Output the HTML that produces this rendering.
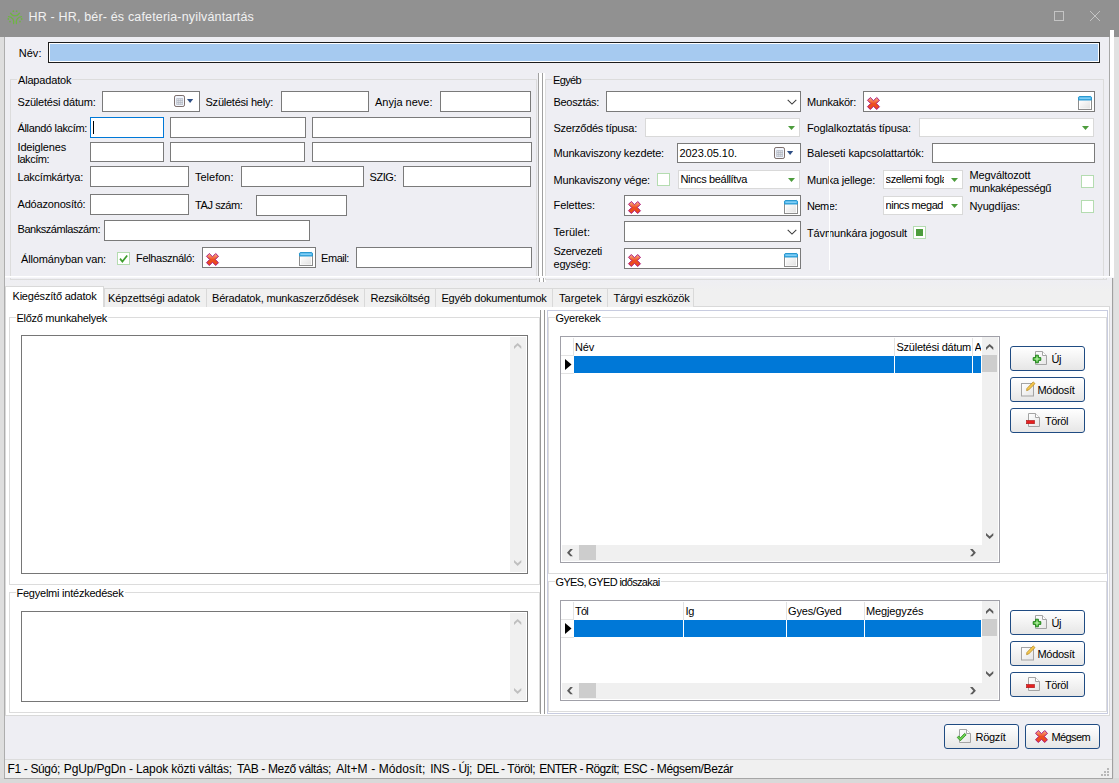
<!DOCTYPE html>
<html lang="hu"><head><meta charset="utf-8"><title>HR - HR, bér- és cafeteria-nyilvántartás</title><style>
html,body{margin:0;padding:0}
body{width:1119px;height:783px;overflow:hidden;background:#d9d9d9;position:relative;font-family:"Liberation Sans",sans-serif;font-size:11px;color:#000}
body>div,body>svg{position:absolute;box-sizing:border-box}
.ic{position:absolute;overflow:visible}
.lbl{white-space:nowrap;line-height:14px;height:auto;letter-spacing:-0.22px;color:#000}
.title{font-size:12.5px;color:#f2f2f2;white-space:nowrap;line-height:18px;}
.status{font-size:12px;white-space:nowrap;line-height:16px}
.inp{background:#fff;border:1px solid #7a7a7a}
.foc{border-color:#0078d7}
.nev{background:#a6caf0;border:1px solid #1c1c1c;box-shadow:inset 0 0 0 1px #fff}
.lcb{background:#fff;border:1px solid #d9d9d9}
.memo{background:#fff;border:1px solid #767676}
.grid{background:#fff;border:1px solid #a0a0a8}
.gb{border:1px solid #dcdcdc}
.it{position:absolute;left:2px;top:3px;white-space:nowrap;letter-spacing:-0.22px;line-height:14px}
.cb{width:13px;height:13px;background:#fff;border:1px solid #b4dcb0}
.tab{background:#f0f0f0;border:1px solid #d9d9d9;border-bottom:none}
.tab.act{background:#fff}
.btn{border:1px solid #1f4b82;border-radius:3px;background:linear-gradient(#ffffff,#f4f4f4 45%,#e6e6e6)}
.bi{width:16px;height:16px}
</style></head><body>
<svg width="0" height="0" style="position:absolute"><defs><linearGradient id="gx" x1="0" y1="0" x2="0" y2="1"><stop offset="0" stop-color="#fbb48c"/><stop offset="0.5" stop-color="#ee4e20"/><stop offset="1" stop-color="#e8481c"/></linearGradient><linearGradient id="gw" x1="0" y1="0" x2="1" y2="1"><stop offset="0" stop-color="#fdfdfd"/><stop offset="1" stop-color="#e2e2e2"/></linearGradient><linearGradient id="gd" x1="0" y1="0" x2="1" y2="1"><stop offset="0" stop-color="#ffffff"/><stop offset="1" stop-color="#e6e6e6"/></linearGradient></defs></svg>
<div class="" style="left:0px;top:0px;width:1119px;height:37px;background:#919191"></div>
<div class="" style="left:0px;top:37px;width:4px;height:746px;background:#dedede"></div>
<div class="" style="left:4px;top:37px;width:1px;height:742px;background:#adadad"></div>
<div class="" style="left:5px;top:37px;width:1104px;height:240px;background:#eeeef3"></div>
<div class="" style="left:1109px;top:37px;width:1px;height:240px;background:#a8a8a8"></div>
<div class="" style="left:1110px;top:30px;width:4px;height:247px;background:#fff"></div>
<div class="" style="left:1114px;top:37px;width:5px;height:746px;background:#e1e1e1"></div>
<div class="" style="left:5px;top:277px;width:1107px;height:30px;background:linear-gradient(#eeeef3,#f0f0f0 14px)"></div>
<div class="" style="left:5px;top:307px;width:1107px;height:452px;background:#eeeef3"></div>
<div class="" style="left:1112px;top:278px;width:1px;height:501px;background:#a0a0a0"></div>
<div class="" style="left:5px;top:759px;width:1107px;height:19px;background:#f0f0f0;border-top:1px solid #dcdcdc;box-sizing:border-box"></div>
<div class="" style="left:0px;top:778px;width:1119px;height:5px;background:#d9d9d9"></div>
<div class="" style="left:4px;top:778px;width:1109px;height:1px;background:#a6a6a6"></div>
<div class="status" style="left:7.5px;top:761px;letter-spacing:-0.353px">F1 - Súgó;</div>
<div class="status" style="left:63.8px;top:761px;letter-spacing:-0.147px">PgUp/PgDn - Lapok közti váltás;</div>
<div class="status" style="left:237px;top:761px;letter-spacing:-0.36px">TAB - Mező váltás;</div>
<div class="status" style="left:336.2px;top:761px;letter-spacing:0.1px">Alt+M - Módosít;</div>
<div class="status" style="left:430.3px;top:761px;letter-spacing:-0.405px">INS - Új;</div>
<div class="status" style="left:476.8px;top:761px;letter-spacing:-0.486px">DEL - Töröl;</div>
<div class="status" style="left:539.3px;top:761px;letter-spacing:-0.644px">ENTER - Rögzít;</div>
<div class="status" style="left:623.8px;top:761px;letter-spacing:-0.38px">ESC - Mégsem/Bezár</div>
<svg class="ic" style="left:1100px;top:767px" width="10" height="10" viewBox="0 0 10 10"><g fill="#b8b8b8"><rect x="7" y="1" width="2" height="2"/><rect x="4" y="4" width="2" height="2"/><rect x="7" y="4" width="2" height="2"/><rect x="1" y="7" width="2" height="2"/><rect x="4" y="7" width="2" height="2"/><rect x="7" y="7" width="2" height="2"/></g></svg>
<svg class="ic" style="left:7px;top:10px" width="16" height="15" viewBox="0 0 16 15"><g fill="none" stroke="#6fb544" stroke-width="1.3" stroke-linecap="round"><path d="M3.5 3.2 A5.2 5.2 0 0 0 12.5 3.2"/><path d="M1.5 6.6 A5.5 5.5 0 0 1 6.6 13.6"/><path d="M14.5 6.6 A5.5 5.5 0 0 0 9.4 13.6"/></g><g fill="#6fb544"><circle cx="6.4" cy="1.2" r="0.9"/><circle cx="9.6" cy="1.2" r="0.9"/><circle cx="1.3" cy="9" r="0.9"/><circle cx="3" cy="11.6" r="0.9"/><circle cx="14.7" cy="9" r="0.9"/><circle cx="13" cy="11.6" r="0.9"/></g></svg>
<div class="title" style="left:28.5px;top:8px;letter-spacing:0.167px">HR - HR, bér- és cafeteria-nyilvántartás</div>
<svg class="ic" style="left:1053px;top:10px" width="12" height="12" viewBox="0 0 12 12"><rect x="1.5" y="1.5" width="9" height="9" fill="none" stroke="#c4c4c4" stroke-width="1"/></svg>
<svg class="ic" style="left:1089px;top:10px" width="12" height="12" viewBox="0 0 12 12"><path d="M1 1 L11 11 M11 1 L1 11" fill="none" stroke="#c4c4c4" stroke-width="1"/></svg>
<div class="lbl" style="left:18.7px;top:46px;letter-spacing:0.044px;">Név:</div>
<div class="nev" style="left:48px;top:42px;width:1052px;height:21px"></div>
<div class="gb" style="left:10px;top:79px;width:527px;height:201px;border-color:#dcdcdc"></div>
<div class="lbl" style="left:17px;top:73px;padding:0 1px;background:#eeeef3;letter-spacing:-0.175px">Alapadatok</div>
<div class="lbl" style="left:17.5px;top:95px;letter-spacing:-0.208px;">Születési dátum:</div>
<div class="inp" style="left:102px;top:91px;width:98px;height:21px"></div>
<svg class="ic" style="left:174px;top:95px" width="22" height="13" viewBox="0 0 22 13"><rect x="0.5" y="0.5" width="10" height="11" rx="1.6" fill="#f2f6fd" stroke="#7c6e6c"/><rect x="2.4" y="3.3" width="6.6" height="6.6" fill="#aeb4c0"/><g fill="#fff"><rect x="3.3" y="4.2" width="1.1" height="1.1"/><rect x="5.3" y="4.2" width="1.1" height="1.1"/><rect x="7.3" y="4.2" width="1.1" height="1.1"/><rect x="3.3" y="6.2" width="1.1" height="1.1"/><rect x="5.3" y="6.2" width="1.1" height="1.1"/><rect x="7.3" y="6.2" width="1.1" height="1.1"/><rect x="3.3" y="8.2" width="1.1" height="1.1"/><rect x="5.3" y="8.2" width="1.1" height="1.1"/><rect x="7.3" y="8.2" width="1.1" height="1.1"/></g><path d="M13 4 h6.2 l-3.1 4z" fill="#2f4f85"/></svg>
<div class="lbl" style="left:205.5px;top:95px;letter-spacing:-0.229px;">Születési hely:</div>
<div class="inp" style="left:281px;top:91px;width:88px;height:21px"></div>
<div class="lbl" style="left:375px;top:95px;letter-spacing:0.001px;">Anyja neve:</div>
<div class="inp" style="left:440px;top:91px;width:91px;height:21px"></div>
<div class="lbl" style="left:17.5px;top:121px;letter-spacing:-0.34px;">Állandó lakcím:</div>
<div class="inp foc" style="left:90px;top:117px;width:74px;height:21px"><div style="position:absolute;left:2px;top:2.5px;width:1px;height:13px;background:#000"></div></div>
<div class="inp" style="left:170px;top:117px;width:136px;height:21px"></div>
<div class="inp" style="left:312px;top:117px;width:219px;height:21px"></div>
<div class="lbl" style="left:17.5px;top:140px;letter-spacing:-0.166px;">Ideiglenes</div>
<div class="lbl" style="left:17.5px;top:152px;letter-spacing:-0.478px;">lakcím:</div>
<div class="inp" style="left:90px;top:142px;width:74px;height:20px"></div>
<div class="inp" style="left:170px;top:142px;width:135px;height:20px"></div>
<div class="inp" style="left:312px;top:142px;width:220px;height:20px"></div>
<div class="lbl" style="left:17.5px;top:170px;letter-spacing:-0.228px;">Lakcímkártya:</div>
<div class="inp" style="left:90px;top:166px;width:99px;height:21px"></div>
<div class="lbl" style="left:195px;top:170px;letter-spacing:-0.004px;">Telefon:</div>
<div class="inp" style="left:241px;top:166px;width:123px;height:21px"></div>
<div class="lbl" style="left:369.5px;top:170px;letter-spacing:-0.447px;">SZIG:</div>
<div class="inp" style="left:403px;top:166px;width:128px;height:21px"></div>
<div class="lbl" style="left:17.5px;top:197px;letter-spacing:-0.18px;">Adóazonosító:</div>
<div class="inp" style="left:90px;top:194px;width:99px;height:21px"></div>
<div class="lbl" style="left:195px;top:198px;letter-spacing:-0.405px;">TAJ szám:</div>
<div class="inp" style="left:256px;top:195px;width:91px;height:21px"></div>
<div class="lbl" style="left:17.5px;top:222px;letter-spacing:-0.451px;">Bankszámlaszám:</div>
<div class="inp" style="left:104px;top:220px;width:206px;height:21px"></div>
<div class="lbl" style="left:21px;top:252px;letter-spacing:-0.153px;">Állományban van:</div>
<div class="cb" style="left:117px;top:252px"><svg width="11" height="11" viewBox="0 0 11 11" style="position:absolute;left:0;top:0"><path d="M2 5.6 L4.4 8.6 L9.2 2.4" fill="none" stroke="#3e9e2e" stroke-width="1.7"/></svg></div>
<div class="lbl" style="left:136px;top:251px;letter-spacing:-0.323px;">Felhasználó:</div>
<div class="inp" style="left:202px;top:247px;width:114px;height:21px"></div>
<svg class="ic" style="left:206px;top:253px" width="13" height="13" viewBox="0 0 13 13"><path d="M3.3 0.5 L6.5 3.7 L9.7 0.5 L12.5 3.3 L9.3 6.5 L12.5 9.7 L9.7 12.5 L6.5 9.3 L3.3 12.5 L0.5 9.7 L3.7 6.5 L0.5 3.3 Z" fill="url(#gx)" stroke="#a8127e" stroke-width="0.95" stroke-linejoin="round"/></svg>
<svg class="ic" style="left:299px;top:252px" width="14" height="14" viewBox="0 0 14 14"><rect x="0.5" y="3.5" width="13" height="10" fill="#fff" stroke="#8c8c8c"/><rect x="2" y="5" width="10" height="7.5" fill="url(#gw)"/><path d="M1.2 0.5 h11.6 l0.7 0.7 v2.8 h-13 v-2.8z" fill="#44aee6" stroke="#2a98cf"/><rect x="1.5" y="1.6" width="11" height="1.1" fill="#9adcfc"/></svg>
<div class="lbl" style="left:321px;top:251px;letter-spacing:-0.427px;">Email:</div>
<div class="inp" style="left:356px;top:247px;width:176px;height:21px"></div>
<div class="" style="left:538px;top:73px;width:1px;height:203px;background:#a0a0a0"></div>
<div class="" style="left:539px;top:73px;width:3px;height:203px;background:#fff"></div>
<div class="" style="left:542px;top:73px;width:1px;height:203px;background:#a0a0a0"></div>
<div class="" style="left:543px;top:73px;width:2px;height:203px;background:#fff"></div>
<div class="" style="left:539px;top:278px;width:7px;height:4px;background:#fff"></div>
<div class="" style="left:539px;top:278px;width:1px;height:4px;background:#a0a0a0"></div>
<div class="" style="left:543px;top:278px;width:1px;height:4px;background:#a0a0a0"></div>
<div class="gb" style="left:545px;top:79px;width:559px;height:201px;border-color:#dcdcdc"></div>
<div class="lbl" style="left:552px;top:73px;padding:0 1px;background:#eeeef3;letter-spacing:-0.641px">Egyéb</div>
<div class="" style="left:1103px;top:279px;width:4px;height:1px;background:#dcdcdc"></div>
<div class="lbl" style="left:553.5px;top:95px;letter-spacing:-0.312px;">Beosztás:</div>
<div class="inp" style="left:606px;top:91px;width:195px;height:21px"></div>
<svg class="ic" style="left:787.3px;top:99.3px" width="10" height="6" viewBox="0 0 10 6"><path d="M0.7 0.8 L5 5.1 L9.3 0.8" fill="none" stroke="#3c3c3c" stroke-width="1.05"/></svg>
<div class="lbl" style="left:807px;top:95px;letter-spacing:-0.262px;">Munkakör:</div>
<div class="inp" style="left:863px;top:91px;width:232px;height:21px"></div>
<svg class="ic" style="left:867px;top:97px" width="13" height="13" viewBox="0 0 13 13"><path d="M3.3 0.5 L6.5 3.7 L9.7 0.5 L12.5 3.3 L9.3 6.5 L12.5 9.7 L9.7 12.5 L6.5 9.3 L3.3 12.5 L0.5 9.7 L3.7 6.5 L0.5 3.3 Z" fill="url(#gx)" stroke="#a8127e" stroke-width="0.95" stroke-linejoin="round"/></svg>
<svg class="ic" style="left:1078px;top:96px" width="14" height="14" viewBox="0 0 14 14"><rect x="0.5" y="3.5" width="13" height="10" fill="#fff" stroke="#8c8c8c"/><rect x="2" y="5" width="10" height="7.5" fill="url(#gw)"/><path d="M1.2 0.5 h11.6 l0.7 0.7 v2.8 h-13 v-2.8z" fill="#44aee6" stroke="#2a98cf"/><rect x="1.5" y="1.6" width="11" height="1.1" fill="#9adcfc"/></svg>
<div class="lbl" style="left:553.5px;top:121px;letter-spacing:-0.268px;">Szerződés típusa:</div>
<div class="lcb" style="left:645px;top:118px;width:155px;height:19px"></div>
<svg class="ic" style="left:788px;top:126px" width="7" height="4" viewBox="0 0 7 4"><path d="M0 0 h7 l-3.5 4z" fill="#4c9c3c"/></svg>
<div class="lbl" style="left:807px;top:121px;letter-spacing:-0.137px;">Foglalkoztatás típusa:</div>
<div class="lcb" style="left:919px;top:118px;width:175px;height:19px"></div>
<svg class="ic" style="left:1082px;top:126px" width="7" height="4" viewBox="0 0 7 4"><path d="M0 0 h7 l-3.5 4z" fill="#4c9c3c"/></svg>
<div class="lbl" style="left:553.5px;top:146px;letter-spacing:-0.183px;">Munkaviszony kezdete:</div>
<div class="inp" style="left:677px;top:143px;width:124px;height:20px"></div>
<div class="lbl" style="left:679.5px;top:146px;letter-spacing:-0.057px;">2023.05.10.</div>
<svg class="ic" style="left:774px;top:147px" width="22" height="13" viewBox="0 0 22 13"><rect x="0.5" y="0.5" width="10" height="11" rx="1.6" fill="#f2f6fd" stroke="#7c6e6c"/><rect x="2.4" y="3.3" width="6.6" height="6.6" fill="#aeb4c0"/><g fill="#fff"><rect x="3.3" y="4.2" width="1.1" height="1.1"/><rect x="5.3" y="4.2" width="1.1" height="1.1"/><rect x="7.3" y="4.2" width="1.1" height="1.1"/><rect x="3.3" y="6.2" width="1.1" height="1.1"/><rect x="5.3" y="6.2" width="1.1" height="1.1"/><rect x="7.3" y="6.2" width="1.1" height="1.1"/><rect x="3.3" y="8.2" width="1.1" height="1.1"/><rect x="5.3" y="8.2" width="1.1" height="1.1"/><rect x="7.3" y="8.2" width="1.1" height="1.1"/></g><path d="M13 4 h6.2 l-3.1 4z" fill="#2f4f85"/></svg>
<div class="lbl" style="left:807px;top:146px;letter-spacing:-0.089px;">Baleseti kapcsolattartók:</div>
<div class="inp" style="left:932px;top:143px;width:163px;height:20px"></div>
<div class="lbl" style="left:553.5px;top:173px;letter-spacing:-0.176px;">Munkaviszony vége:</div>
<div class="cb" style="left:657px;top:173px"></div>
<div class="lcb" style="left:678px;top:170px;width:122px;height:19px"></div>
<div class="lbl" style="left:680.5px;top:172px;letter-spacing:-0.336px;">Nincs beállítva</div>
<svg class="ic" style="left:788px;top:178px" width="7" height="4" viewBox="0 0 7 4"><path d="M0 0 h7 l-3.5 4z" fill="#4c9c3c"/></svg>
<div class="lbl" style="left:807px;top:173px;letter-spacing:-0.21px;">Munka jellege:</div>
<div class="lcb" style="left:883px;top:170px;width:80px;height:19px"></div>
<div style="left:885.5px;top:172px;width:58.5px;height:14px;overflow:hidden"><div class="lbl" style="position:absolute;left:0;top:0;letter-spacing:-0.349px">szellemi foglalkozású</div></div>
<svg class="ic" style="left:951px;top:178px" width="7" height="4" viewBox="0 0 7 4"><path d="M0 0 h7 l-3.5 4z" fill="#4c9c3c"/></svg>
<div class="lbl" style="left:969.5px;top:168px;letter-spacing:-0.115px;">Megváltozott</div>
<div class="lbl" style="left:969.5px;top:181px;letter-spacing:-0.338px;">munkaképességű</div>
<div class="cb" style="left:1081px;top:175px"></div>
<div class="lbl" style="left:553.5px;top:198px;letter-spacing:-0.076px;">Felettes:</div>
<div class="inp" style="left:624px;top:195px;width:177px;height:21px"></div>
<svg class="ic" style="left:628px;top:201px" width="13" height="13" viewBox="0 0 13 13"><path d="M3.3 0.5 L6.5 3.7 L9.7 0.5 L12.5 3.3 L9.3 6.5 L12.5 9.7 L9.7 12.5 L6.5 9.3 L3.3 12.5 L0.5 9.7 L3.7 6.5 L0.5 3.3 Z" fill="url(#gx)" stroke="#a8127e" stroke-width="0.95" stroke-linejoin="round"/></svg>
<svg class="ic" style="left:784px;top:200px" width="14" height="14" viewBox="0 0 14 14"><rect x="0.5" y="3.5" width="13" height="10" fill="#fff" stroke="#8c8c8c"/><rect x="2" y="5" width="10" height="7.5" fill="url(#gw)"/><path d="M1.2 0.5 h11.6 l0.7 0.7 v2.8 h-13 v-2.8z" fill="#44aee6" stroke="#2a98cf"/><rect x="1.5" y="1.6" width="11" height="1.1" fill="#9adcfc"/></svg>
<div class="lbl" style="left:807px;top:199px;letter-spacing:-0.481px;">Neme:</div>
<div class="lcb" style="left:883px;top:196px;width:80px;height:19px"></div>
<div style="left:885.5px;top:198px;width:57.799999999999955px;height:14px;overflow:hidden"><div class="lbl" style="position:absolute;left:0;top:0;letter-spacing:-0.443px">nincs megadva</div></div>
<svg class="ic" style="left:951px;top:204px" width="7" height="4" viewBox="0 0 7 4"><path d="M0 0 h7 l-3.5 4z" fill="#4c9c3c"/></svg>
<div class="lbl" style="left:969.5px;top:199px;letter-spacing:-0.148px;">Nyugdíjas:</div>
<div class="cb" style="left:1081px;top:200px"></div>
<div class="lbl" style="left:553.5px;top:225px;letter-spacing:0.053px;">Terület:</div>
<div class="inp" style="left:624px;top:221px;width:177px;height:21px"></div>
<svg class="ic" style="left:787.3px;top:229.3px" width="10" height="6" viewBox="0 0 10 6"><path d="M0.7 0.8 L5 5.1 L9.3 0.8" fill="none" stroke="#3c3c3c" stroke-width="1.05"/></svg>
<div class="lbl" style="left:807px;top:226px;letter-spacing:-0.111px;">Távmunkára jogosult</div>
<div class="cb" style="left:913px;top:226px"><div style="position:absolute;left:2px;top:2px;width:7px;height:7px;background:#4c9c3c"></div></div>
<div class="lbl" style="left:553.5px;top:244.3px;letter-spacing:-0.286px;">Szervezeti</div>
<div class="lbl" style="left:553.5px;top:256.8px;letter-spacing:-0.219px;">egység:</div>
<div class="inp" style="left:624px;top:248px;width:177px;height:21px"></div>
<svg class="ic" style="left:628px;top:254px" width="13" height="13" viewBox="0 0 13 13"><path d="M3.3 0.5 L6.5 3.7 L9.7 0.5 L12.5 3.3 L9.3 6.5 L12.5 9.7 L9.7 12.5 L6.5 9.3 L3.3 12.5 L0.5 9.7 L3.7 6.5 L0.5 3.3 Z" fill="url(#gx)" stroke="#a8127e" stroke-width="0.95" stroke-linejoin="round"/></svg>
<svg class="ic" style="left:784px;top:253px" width="14" height="14" viewBox="0 0 14 14"><rect x="0.5" y="3.5" width="13" height="10" fill="#fff" stroke="#8c8c8c"/><rect x="2" y="5" width="10" height="7.5" fill="url(#gw)"/><path d="M1.2 0.5 h11.6 l0.7 0.7 v2.8 h-13 v-2.8z" fill="#44aee6" stroke="#2a98cf"/><rect x="1.5" y="1.6" width="11" height="1.1" fill="#9adcfc"/></svg>
<div class="" style="left:829px;top:158px;width:1px;height:112px;background:#fff"></div>
<div class="" style="left:5px;top:276px;width:1109px;height:1px;background:#fff"></div>
<div class="" style="left:5px;top:277px;width:1109px;height:1px;background:#f7f7fa"></div>
<div class="" style="left:1106px;top:278px;width:1px;height:2px;background:#dcdcdc"></div>
<div class="" style="left:5px;top:306px;width:1105px;height:410px;background:#fff;border:1px solid #d9d9d9;box-sizing:border-box"></div>
<div class="tab act" style="left:5px;top:286px;width:99px;height:21px"></div>
<div class="lbl" style="left:12.5px;top:289px;letter-spacing:-0.203px;">Kiegészítő adatok</div>
<div class="tab" style="left:104px;top:288px;width:103px;height:19px"></div>
<div class="lbl" style="left:108px;top:291px;letter-spacing:-0.088px;">Képzettségi adatok</div>
<div class="tab" style="left:206px;top:288px;width:159px;height:19px"></div>
<div class="lbl" style="left:212px;top:291px;letter-spacing:-0.168px;">Béradatok, munkaszerződések</div>
<div class="tab" style="left:364px;top:288px;width:72px;height:19px"></div>
<div class="lbl" style="left:370.5px;top:291px;letter-spacing:-0.28px;">Rezsiköltség</div>
<div class="tab" style="left:435px;top:288px;width:118px;height:19px"></div>
<div class="lbl" style="left:441.5px;top:291px;letter-spacing:-0.247px;">Egyéb dokumentumok</div>
<div class="tab" style="left:552px;top:288px;width:56px;height:19px"></div>
<div class="lbl" style="left:559px;top:291px;letter-spacing:0.037px;">Targetek</div>
<div class="tab" style="left:607px;top:288px;width:87px;height:19px"></div>
<div class="lbl" style="left:613.5px;top:291px;letter-spacing:-0.232px;">Tárgyi eszközök</div>
<div class="gb" style="left:9px;top:317px;width:531px;height:268px;border-color:#dcdcdc"></div>
<div class="lbl" style="left:15.5px;top:310.5px;padding:0 1px;background:#fff;letter-spacing:-0.288px">Előző munkahelyek</div>
<div class="gb" style="left:9px;top:592px;width:531px;height:121px;border-color:#dcdcdc"></div>
<div class="lbl" style="left:15.5px;top:585.5px;padding:0 1px;background:#fff;letter-spacing:-0.233px">Fegyelmi intézkedések</div>
<div class="memo" style="left:21px;top:335px;width:507px;height:239px"></div>
<div class="" style="left:510px;top:337px;width:16px;height:235px;background:#f0f0f0"></div>
<svg class="ic" style="left:513.8px;top:343px" width="7.3" height="5.9" viewBox="0 0 7.3 5.9"><polygon points="0,3.3 3.65,0 7.3,3.3 7.3,5.9 3.65,2.6 0,5.9" fill="#bfbfbf"/></svg>
<svg class="ic" style="left:513.8px;top:560.2px" width="7.3" height="5.9" viewBox="0 0 7.3 5.9"><polygon points="0,2.6 3.65,5.9 7.3,2.6 7.3,0 3.65,3.3 0,0" fill="#bfbfbf"/></svg>
<div class="memo" style="left:21px;top:611px;width:507px;height:91px"></div>
<div class="" style="left:510px;top:613px;width:16px;height:87px;background:#f0f0f0"></div>
<svg class="ic" style="left:513.8px;top:619px" width="7.3" height="5.9" viewBox="0 0 7.3 5.9"><polygon points="0,3.3 3.65,0 7.3,3.3 7.3,5.9 3.65,2.6 0,5.9" fill="#bfbfbf"/></svg>
<svg class="ic" style="left:513.8px;top:688.2px" width="7.3" height="5.9" viewBox="0 0 7.3 5.9"><polygon points="0,2.6 3.65,5.9 7.3,2.6 7.3,0 3.65,3.3 0,0" fill="#bfbfbf"/></svg>
<div class="" style="left:540px;top:310px;width:1px;height:404px;background:#989898"></div>
<div class="" style="left:544px;top:310px;width:1px;height:404px;background:#989898"></div>
<div class="" style="left:547px;top:310px;width:561px;height:404px;border:1px solid #c8cce0;box-sizing:border-box"></div>
<div class="gb" style="left:548px;top:317px;width:559px;height:257px;border-color:#dcdcdc"></div>
<div class="lbl" style="left:554.5px;top:311px;padding:0 1px;background:#fff;letter-spacing:-0.26px">Gyerekek</div>
<div class="gb" style="left:548px;top:581px;width:559px;height:131px;border-color:#dcdcdc"></div>
<div class="lbl" style="left:554.5px;top:575px;padding:0 1px;background:#fff;letter-spacing:-0.639px">GYES, GYED időszakai</div>
<div class="grid" style="left:560px;top:336px;width:440px;height:227px"></div>
<div class="" style="left:573px;top:338px;width:1px;height:18px;background:#e3e3e3"></div>
<div class="" style="left:561px;top:355px;width:13px;height:1px;background:#e3e3e3"></div>
<div class="" style="left:561px;top:373px;width:13px;height:1px;background:#e3e3e3"></div>
<div class="" style="left:574px;top:356px;width:407px;height:17px;background:#0078d7"></div>
<div class="lbl" style="left:575.0px;top:340px;letter-spacing:-0.188px;">Név</div>
<div class="lbl" style="left:896.5px;top:340px;letter-spacing:-0.251px;">Születési dátum</div>
<div style="left:974.5px;top:340px;width:6.5px;height:14px;overflow:hidden"><div class="lbl" style="position:absolute;left:0;top:0;letter-spacing:-0.22px">A</div></div>
<div class="" style="left:894px;top:338px;width:1px;height:18px;background:#e3e3e3"></div>
<div class="" style="left:894px;top:356px;width:1px;height:17px;background:#fff"></div>
<div class="" style="left:972px;top:338px;width:1px;height:18px;background:#e3e3e3"></div>
<div class="" style="left:972px;top:356px;width:1px;height:17px;background:#fff"></div>
<svg class="ic" style="left:565px;top:359px" width="7" height="11" viewBox="0 0 7 11"><path d="M0 0 L6.5 5.5 L0 11z" fill="#000"/></svg>
<div class="" style="left:982px;top:337px;width:16px;height:224px;background:#f0f0f0"></div>
<div class="" style="left:982px;top:355px;width:15px;height:17px;background:#cdcdcd"></div>
<svg class="ic" style="left:985.8px;top:343.8px" width="7.3" height="5.9" viewBox="0 0 7.3 5.9"><polygon points="0,3.3 3.65,0 7.3,3.3 7.3,5.9 3.65,2.6 0,5.9" fill="#5c5c5c"/></svg>
<svg class="ic" style="left:985.8px;top:533.1px" width="7.3" height="5.9" viewBox="0 0 7.3 5.9"><polygon points="0,2.6 3.65,5.9 7.3,2.6 7.3,0 3.65,3.3 0,0" fill="#5c5c5c"/></svg>
<div class="" style="left:562px;top:545px;width:436px;height:16px;background:#f0f0f0"></div>
<div class="" style="left:579px;top:545px;width:17px;height:15px;background:#cdcdcd"></div>
<svg class="ic" style="left:566.9px;top:548.7px" width="5.9" height="7.3" viewBox="0 0 5.9 7.3"><polygon points="3.3,0 0,3.65 3.3,7.3 5.9,7.3 2.6,3.65 5.9,0" fill="#5c5c5c"/></svg>
<svg class="ic" style="left:969.9px;top:548.7px" width="5.9" height="7.3" viewBox="0 0 5.9 7.3"><polygon points="2.6,0 5.9,3.65 2.6,7.3 0,7.3 3.3,3.65 0,0" fill="#5c5c5c"/></svg>
<div class="grid" style="left:560px;top:600px;width:440px;height:101px"></div>
<div class="" style="left:573px;top:602px;width:1px;height:18px;background:#e3e3e3"></div>
<div class="" style="left:561px;top:619px;width:13px;height:1px;background:#e3e3e3"></div>
<div class="" style="left:561px;top:637px;width:13px;height:1px;background:#e3e3e3"></div>
<div class="" style="left:574px;top:620px;width:407px;height:17px;background:#0078d7"></div>
<div class="lbl" style="left:575.0px;top:604px;letter-spacing:-0.76px;">Tól</div>
<div class="lbl" style="left:685.5px;top:604px;letter-spacing:-0.344px;">Ig</div>
<div class="lbl" style="left:788.0px;top:604px;letter-spacing:-0.17px;">Gyes/Gyed</div>
<div class="lbl" style="left:866.0px;top:604px;letter-spacing:-0.12px;">Megjegyzés</div>
<div class="" style="left:683px;top:602px;width:1px;height:18px;background:#e3e3e3"></div>
<div class="" style="left:683px;top:620px;width:1px;height:17px;background:#fff"></div>
<div class="" style="left:785.5px;top:602px;width:1px;height:18px;background:#e3e3e3"></div>
<div class="" style="left:785.5px;top:620px;width:1px;height:17px;background:#fff"></div>
<div class="" style="left:863.5px;top:602px;width:1px;height:18px;background:#e3e3e3"></div>
<div class="" style="left:863.5px;top:620px;width:1px;height:17px;background:#fff"></div>
<svg class="ic" style="left:565px;top:623px" width="7" height="11" viewBox="0 0 7 11"><path d="M0 0 L6.5 5.5 L0 11z" fill="#000"/></svg>
<div class="" style="left:982px;top:601px;width:16px;height:98px;background:#f0f0f0"></div>
<div class="" style="left:982px;top:619px;width:15px;height:17px;background:#cdcdcd"></div>
<svg class="ic" style="left:985.8px;top:607.8px" width="7.3" height="5.9" viewBox="0 0 7.3 5.9"><polygon points="0,3.3 3.65,0 7.3,3.3 7.3,5.9 3.65,2.6 0,5.9" fill="#5c5c5c"/></svg>
<svg class="ic" style="left:985.8px;top:671.1px" width="7.3" height="5.9" viewBox="0 0 7.3 5.9"><polygon points="0,2.6 3.65,5.9 7.3,2.6 7.3,0 3.65,3.3 0,0" fill="#5c5c5c"/></svg>
<div class="" style="left:562px;top:683px;width:436px;height:16px;background:#f0f0f0"></div>
<div class="" style="left:579px;top:683px;width:17px;height:15px;background:#cdcdcd"></div>
<svg class="ic" style="left:566.9px;top:686.7px" width="5.9" height="7.3" viewBox="0 0 5.9 7.3"><polygon points="3.3,0 0,3.65 3.3,7.3 5.9,7.3 2.6,3.65 5.9,0" fill="#5c5c5c"/></svg>
<svg class="ic" style="left:969.9px;top:686.7px" width="5.9" height="7.3" viewBox="0 0 5.9 7.3"><polygon points="2.6,0 5.9,3.65 2.6,7.3 0,7.3 3.3,3.65 0,0" fill="#5c5c5c"/></svg>
<div class="btn" style="left:1010px;top:346px;width:75px;height:25px"></div>
<div class="bi" style="left:1032px;top:350px"><svg width="16" height="16" viewBox="0 0 16 16"><path d="M3.5 1.5 h7 l4 4 v9 h-11z" fill="url(#gd)" stroke="#a4a4a4"/><path d="M10.5 1.5 v4 h4" fill="#fff" stroke="#a4a4a4"/><path d="M3.6 5.2 h2.8 v2.4 h2.4 v2.8 h-2.4 v2.4 h-2.8 v-2.4 h-2.4 v-2.8 h2.4z" fill="#52c43c" stroke="#1c7c16" stroke-width="0.9"/><path d="M5 6.6 v4.8 M2.6 9 h4.8" stroke="#d6f6cc" stroke-width="0.8" fill="none"/></svg></div>
<div class="lbl" style="left:1051.5px;top:352px;letter-spacing:-0.445px;">Új</div>
<div class="btn" style="left:1010px;top:377px;width:75px;height:25px"></div>
<div class="bi" style="left:1020px;top:381px"><svg width="16" height="16" viewBox="0 0 16 16"><rect x="1.5" y="2.5" width="12" height="12.5" fill="url(#gd)" stroke="#a4a4a4"/><path d="M13.2 0.9 L15 2.6 L8.6 9 L6.6 9.6 L7 7.4z" fill="#f6c84e" stroke="#b88c22" stroke-width="0.8"/></svg></div>
<div class="lbl" style="left:1037.5px;top:383px;letter-spacing:-0.306px;">Módosít</div>
<div class="btn" style="left:1010px;top:408px;width:75px;height:25px"></div>
<div class="bi" style="left:1024.5px;top:412px"><svg width="16" height="16" viewBox="0 0 16 16"><path d="M3.5 1.5 h7 l4 4 v9 h-11z" fill="url(#gd)" stroke="#a4a4a4"/><path d="M10.5 1.5 v4 h4" fill="#fff" stroke="#a4a4a4"/><rect x="1.5" y="8.5" width="8" height="3.2" fill="#e62020" stroke="#a61414" stroke-width="0.6"/></svg></div>
<div class="lbl" style="left:1045px;top:414px;letter-spacing:-0.412px;">Töröl</div>
<div class="btn" style="left:1010px;top:610px;width:75px;height:25px"></div>
<div class="bi" style="left:1032px;top:614px"><svg width="16" height="16" viewBox="0 0 16 16"><path d="M3.5 1.5 h7 l4 4 v9 h-11z" fill="url(#gd)" stroke="#a4a4a4"/><path d="M10.5 1.5 v4 h4" fill="#fff" stroke="#a4a4a4"/><path d="M3.6 5.2 h2.8 v2.4 h2.4 v2.8 h-2.4 v2.4 h-2.8 v-2.4 h-2.4 v-2.8 h2.4z" fill="#52c43c" stroke="#1c7c16" stroke-width="0.9"/><path d="M5 6.6 v4.8 M2.6 9 h4.8" stroke="#d6f6cc" stroke-width="0.8" fill="none"/></svg></div>
<div class="lbl" style="left:1051.5px;top:616px;letter-spacing:-0.445px;">Új</div>
<div class="btn" style="left:1010px;top:641px;width:75px;height:25px"></div>
<div class="bi" style="left:1020px;top:645px"><svg width="16" height="16" viewBox="0 0 16 16"><rect x="1.5" y="2.5" width="12" height="12.5" fill="url(#gd)" stroke="#a4a4a4"/><path d="M13.2 0.9 L15 2.6 L8.6 9 L6.6 9.6 L7 7.4z" fill="#f6c84e" stroke="#b88c22" stroke-width="0.8"/></svg></div>
<div class="lbl" style="left:1037.5px;top:647px;letter-spacing:-0.306px;">Módosít</div>
<div class="btn" style="left:1010px;top:672px;width:75px;height:25px"></div>
<div class="bi" style="left:1024.5px;top:676px"><svg width="16" height="16" viewBox="0 0 16 16"><path d="M3.5 1.5 h7 l4 4 v9 h-11z" fill="url(#gd)" stroke="#a4a4a4"/><path d="M10.5 1.5 v4 h4" fill="#fff" stroke="#a4a4a4"/><rect x="1.5" y="8.5" width="8" height="3.2" fill="#e62020" stroke="#a61414" stroke-width="0.6"/></svg></div>
<div class="lbl" style="left:1045px;top:678px;letter-spacing:-0.412px;">Töröl</div>
<div class="btn" style="left:944px;top:724px;width:75px;height:25px"></div>
<div class="bi" style="left:956px;top:728px"><svg width="16" height="16" viewBox="0 0 16 16"><path d="M3.5 1.5 h7 l4 4 v9 h-11z" fill="url(#gd)" stroke="#a4a4a4"/><path d="M10.5 1.5 v4 h4" fill="#fff" stroke="#a4a4a4"/><path d="M1.2 9.4 L4.4 12.8 L10.2 6.8 L8.6 5.4 L4.4 9.8 L2.8 8z" fill="#6ad050" stroke="#2a8a1a" stroke-width="0.8"/></svg></div>
<div class="lbl" style="left:975.5px;top:730px;letter-spacing:-0.299px;">Rögzít</div>
<div class="btn" style="left:1025px;top:724px;width:75px;height:25px"></div>
<div class="bi" style="left:1034.5px;top:730px"><svg width="13" height="13" viewBox="0 0 13 13"><path d="M3.3 0.5 L6.5 3.7 L9.7 0.5 L12.5 3.3 L9.3 6.5 L12.5 9.7 L9.7 12.5 L6.5 9.3 L3.3 12.5 L0.5 9.7 L3.7 6.5 L0.5 3.3 Z" fill="url(#gx)" stroke="#a8127e" stroke-width="0.95" stroke-linejoin="round"/></svg></div>
<div class="lbl" style="left:1051.5px;top:730px;letter-spacing:-0.615px;">Mégsem</div>
</body></html>
